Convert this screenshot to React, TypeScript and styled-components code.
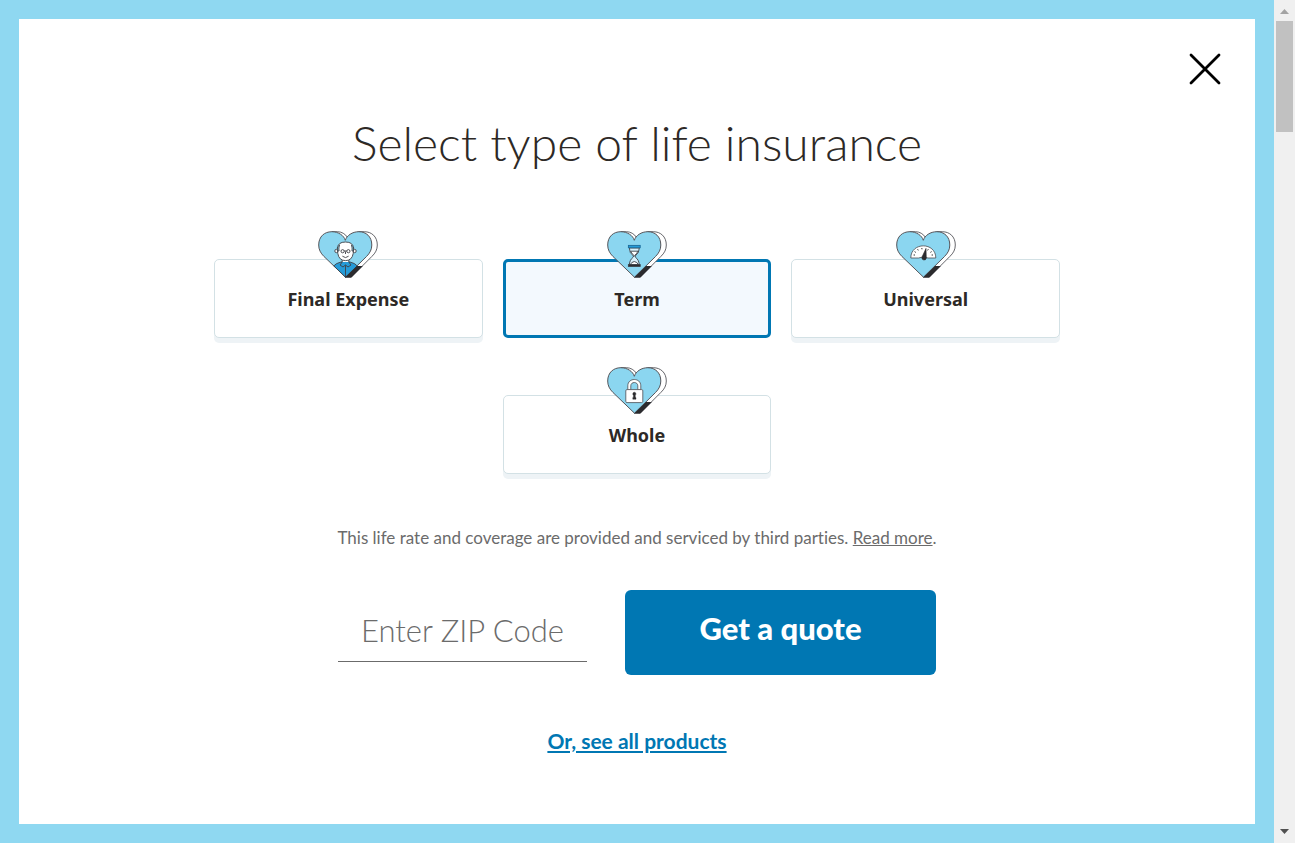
import React, { useState } from 'react';
import styled, { createGlobalStyle } from 'styled-components';

const GlobalStyle = createGlobalStyle`
  *, *::before, *::after { box-sizing: border-box; }
  html, body { margin: 0; padding: 0; }
  body {
    font-family: Lato, "Liberation Sans", sans-serif;
    font-variant-ligatures: none;
    color: #2d2926;
    background: #fff;
  }
`;

const Page = styled.div`
  display: grid;
  grid-template-columns: 1fr 21px;
  min-height: 100vh;
`;

const Frame = styled.main`
  display: flex;
  padding: 19px;
  background: #8fd8f1;
`;

const Dialog = styled.section`
  flex: 1;
  display: flex;
  flex-direction: column;
  align-items: center;
  padding: 30px;
  background: #fff;
`;

const CloseButton = styled.button`
  align-self: flex-end;
  display: flex;
  padding: 4px;
  border: 0;
  background: none;
  cursor: pointer;
`;

const Title = styled.h1`
  margin: 22px 0 0;
  font-size: 48px;
  line-height: 64px;
  font-weight: 300;
  text-align: center;
`;

const Options = styled.fieldset`
  display: flex;
  flex-wrap: wrap;
  justify-content: center;
  gap: 57px 20px;
  width: 100%;
  max-width: 846px;
  margin: 84px 0 0;
  padding: 0;
  border: 0;
`;

const Option = styled.label<{ $selected: boolean }>`
  position: relative;
  flex: 0 1 calc((100% - 40px) / 3);
  min-width: 200px;
  height: 79px;
  padding-top: ${p => (p.$selected ? 25 : 27)}px;
  border: ${p => (p.$selected ? '3px solid #0077b3' : '1px solid #d3e1e5')};
  border-radius: 5px;
  background: ${p => (p.$selected ? '#f3f9fe' : '#fff')};
  box-shadow: ${p => (p.$selected ? 'none' : '0 5px 0 #eef3f6')};
  font-family: "Noto Sans", sans-serif;
  font-size: 18px;
  line-height: 24px;
  font-weight: 700;
  text-align: center;
  cursor: pointer;
`;

const HiddenRadio = styled.input`
  position: absolute;
  opacity: 0;
  width: 1px;
  height: 1px;
  margin: 0;
`;

const Badge = styled.svg<{ $selected: boolean }>`
  position: absolute;
  top: ${p => (p.$selected ? -31 : -29)}px;
  left: calc(50% - 30px);
`;

const Note = styled.p`
  margin: 52px 0 0;
  font-size: 17px;
  line-height: 24px;
  color: #6b6b6b;
  text-align: center;

  a { color: inherit; }
`;

const QuoteForm = styled.form`
  display: flex;
  flex-wrap: wrap;
  justify-content: center;
  align-items: flex-start;
  gap: 38px;
  margin-top: 40px;
`;

const ZipInput = styled.input`
  width: 249px;
  height: 72px;
  padding: 8px 0 0;
  border: 0;
  border-bottom: 1px solid #6b6b6b;
  background: none;
  font: 300 31px/40px Lato, sans-serif;
  text-align: center;
  color: #2d2926;

  &::placeholder { color: #6b6b6b; opacity: 1; }
`;

const QuoteButton = styled.button`
  width: 311px;
  height: 85px;
  padding: 0 0 10px;
  border: 0;
  border-radius: 6px;
  background: #0077b3;
  color: #fff;
  font: 900 31px/40px Lato, sans-serif;
  cursor: pointer;
`;

const ProductsLink = styled.a`
  margin-top: 54px;
  font-size: 21px;
  line-height: 24px;
  font-weight: 700;
  color: #0077b3;
`;

const ScrollTrack = styled.div`
  display: flex;
  flex-direction: column;
  align-items: center;
  justify-content: space-between;
  padding: 9px 2px;
  background: #f0f0f0;
`;

const ScrollTop = styled.div`
  display: flex;
  flex-direction: column;
  align-items: center;
  gap: 7px;
  width: 100%;
`;

const ScrollThumb = styled.div`
  width: 17px;
  height: 111px;
  background: #c1c1c1;
`;

const HEART =
  'M27.5 46.2 L6 25.5 C2.5 22 .7 18.5 .7 14 C.7 5.5 6.5 .7 13.8 .7 C20.5 .7 26 4.6 27.3 9.3 C28.8 4.6 34.2 .7 40.8 .7 C48 .7 53.8 5.5 53.8 14 C53.8 18.5 52 22 48.5 25.5 Z';

function Person() {
  return (
    <g stroke="#3f3f45" strokeWidth=".9" fill="#fff">
      <path d="M15.8 34.9 Q18 32.2 23 31 L32 31 Q37 32.2 39.2 34.9 L27.5 46.2 Z" fill="#259bd8" />
      <path d="M24.2 28 V32 L27.5 34.5 L30.8 32 V28" />
      <path d="M24.2 31 L22 34 L25 36 L27.5 34 L30 36 L33 34 L30.8 31" fill="#259bd8" />
      <path d="M27.5 34.5 V46" />
      <circle cx="18.5" cy="20" r="1.7" />
      <circle cx="36.5" cy="20" r="1.7" />
      <path d="M19.5 17 Q20 11 27.5 11 Q35 11 35.5 17 L35.2 22.5 Q34 29.6 27.5 29.6 Q21 29.6 19.8 22.5 Z" />
      <path d="M19.4 20 Q18.5 15 21.5 14 Q20.5 17 21 20 Z M35.6 20 Q36.5 15 33.5 14 Q34.5 17 34 20 Z" fill="#8bd6f0" />
      <circle cx="24.6" cy="20.2" r="1.6" />
      <circle cx="30.4" cy="20.2" r="1.6" />
      <path d="M26.2 20 H28.8 M27.5 20.5 V23 M24.4 25.2 Q27.5 28 30.6 25.2" fill="none" />
    </g>
  );
}

function Hourglass() {
  return (
    <g stroke="#3b4046" strokeWidth=".9">
      <path d="M22.3 17 H32.3 Q32.3 22 28.2 25 V26 Q32.3 29 32.3 34.5 H22.3 Q22.3 29 26.4 26 V25 Q22.3 22 22.3 17 Z" fill="#d7f1fb" />
      <path d="M23.6 20.2 H31 Q29.8 22.8 27.3 24.8 Q24.8 22.8 23.6 20.2 Z" fill="#fff" />
      <path d="M23 34 Q24.5 30.8 27.3 30.5 Q30.2 30.8 31.6 34 Z" fill="#fff" />
      <rect x="21.4" y="14.4" width="11.8" height="2.3" fill="#259bd8" stroke="#1c6c9c" />
      <rect x="21.4" y="33.6" width="11.8" height="1.8" fill="#2b2b2e" />
    </g>
  );
}

function Gauge() {
  return (
    <g>
      <path d="M14.8 27 C14.8 10.8 39.8 10.8 39.8 27 H32 Q27.3 24.8 22.6 27 Z" fill="#fff" stroke="#4b4b50" strokeWidth=".8" />
      <path d="M17.6 24 h1.4 M18.6 20.6 l1.2 .8 M21.6 18.2 l.7 1.2 M25.8 17 l.2 1.3 M32.3 18.2 l-.7 1.2 M35.6 20.6 l-1.2 .8 M37 24 h-1.4" stroke="#333" strokeWidth="1" />
      <path d="M30 17.4 L30.3 27.4 A2.2 2.2 0 1 1 26 26 Z" fill="#2b2b2e" stroke="#2b2b2e" strokeWidth=".6" />
    </g>
  );
}

function Padlock() {
  return (
    <g stroke="#4b4b50" strokeWidth=".8" fill="#fff">
      <path d="M20.8 23 V18.8 C20.8 10.4 33.8 10.4 33.8 18.8 V23 H30.8 V18.8 C30.8 14.4 23.8 14.4 23.8 18.8 V23 Z" />
      <rect x="18.8" y="22.6" width="17" height="13" rx="1.2" />
      <path d="M27.3 25.2 A1.7 1.7 0 0 1 28.3 28.2 V30.6 H29 V32.2 H25.8 V30.6 H26.4 V28.2 A1.7 1.7 0 0 1 27.3 25.2 Z" fill="#2b2b2e" stroke="#2b2b2e" strokeWidth=".4" />
    </g>
  );
}

function HeartBadge({ selected, children }: { selected: boolean; children: React.ReactNode }) {
  return (
    <Badge $selected={selected} width="60" height="48" viewBox="0 0 60 48" aria-hidden="true">
      <path
        d="M27.5 46.2 H33.2 L53.8 25.5 C57.5 22 59.3 18.5 59.3 14 C59.3 5.5 53.5 .7 46.3 .7 H40.8 L29.5 6.5 C27.5 3 23.5 .7 19.5 .7 H13.8 Z"
        fill="#fff"
        stroke="#55555a"
        strokeWidth=".9"
      />
      <path d={HEART} fill="#8bd6f0" stroke="#55555a" strokeWidth="1" />
      {children}
      <path d="M27 46.6 L38.9 34.9 H44.9 L33.4 46.6 Z" fill="#2b2b2e" />
    </Badge>
  );
}

const PRODUCTS = [
  { name: 'Final Expense', icon: <Person /> },
  { name: 'Term', icon: <Hourglass /> },
  { name: 'Universal', icon: <Gauge /> },
  { name: 'Whole', icon: <Padlock /> },
];

export default function App() {
  const [selected, setSelected] = useState('Term');
  const [zip, setZip] = useState('');

  return (
    <Page>
      <GlobalStyle />
      <Frame>
        <Dialog aria-labelledby="dialog-title">
          <CloseButton type="button" aria-label="Close">
            <svg width="32" height="32" viewBox="0 0 32 32" fill="none" stroke="#000" strokeWidth="2.8" strokeLinecap="round">
              <path d="M2 2 L30 30 M30 2 L2 30" />
            </svg>
          </CloseButton>
          <Title id="dialog-title">Select type of life insurance</Title>
          <Options aria-labelledby="dialog-title">
            {PRODUCTS.map(({ name, icon }) => (
              <Option key={name} $selected={selected === name}>
                <HiddenRadio
                  type="radio"
                  name="product"
                  value={name}
                  checked={selected === name}
                  onChange={() => setSelected(name)}
                />
                <HeartBadge selected={selected === name}>{icon}</HeartBadge>
                {name}
              </Option>
            ))}
          </Options>
          <Note>
            This life rate and coverage are provided and serviced by third parties. <a href="#read-more">Read more</a>.
          </Note>
          <QuoteForm onSubmit={e => e.preventDefault()}>
            <ZipInput
              aria-label="Enter ZIP Code"
              placeholder="Enter ZIP Code"
              inputMode="numeric"
              value={zip}
              onChange={e => setZip(e.target.value)}
            />
            <QuoteButton type="submit">Get a quote</QuoteButton>
          </QuoteForm>
          <ProductsLink href="#products">Or, see all products</ProductsLink>
        </Dialog>
      </Frame>
      <ScrollTrack aria-hidden="true">
        <ScrollTop>
          <svg width="9" height="5" viewBox="0 0 9 5"><path d="M0 5 L4.5 0 L9 5 Z" fill="#a3a3a3" /></svg>
          <ScrollThumb />
        </ScrollTop>
        <svg width="9" height="5" viewBox="0 0 9 5"><path d="M0 0 L4.5 5 L9 0 Z" fill="#505050" /></svg>
      </ScrollTrack>
    </Page>
  );
}
